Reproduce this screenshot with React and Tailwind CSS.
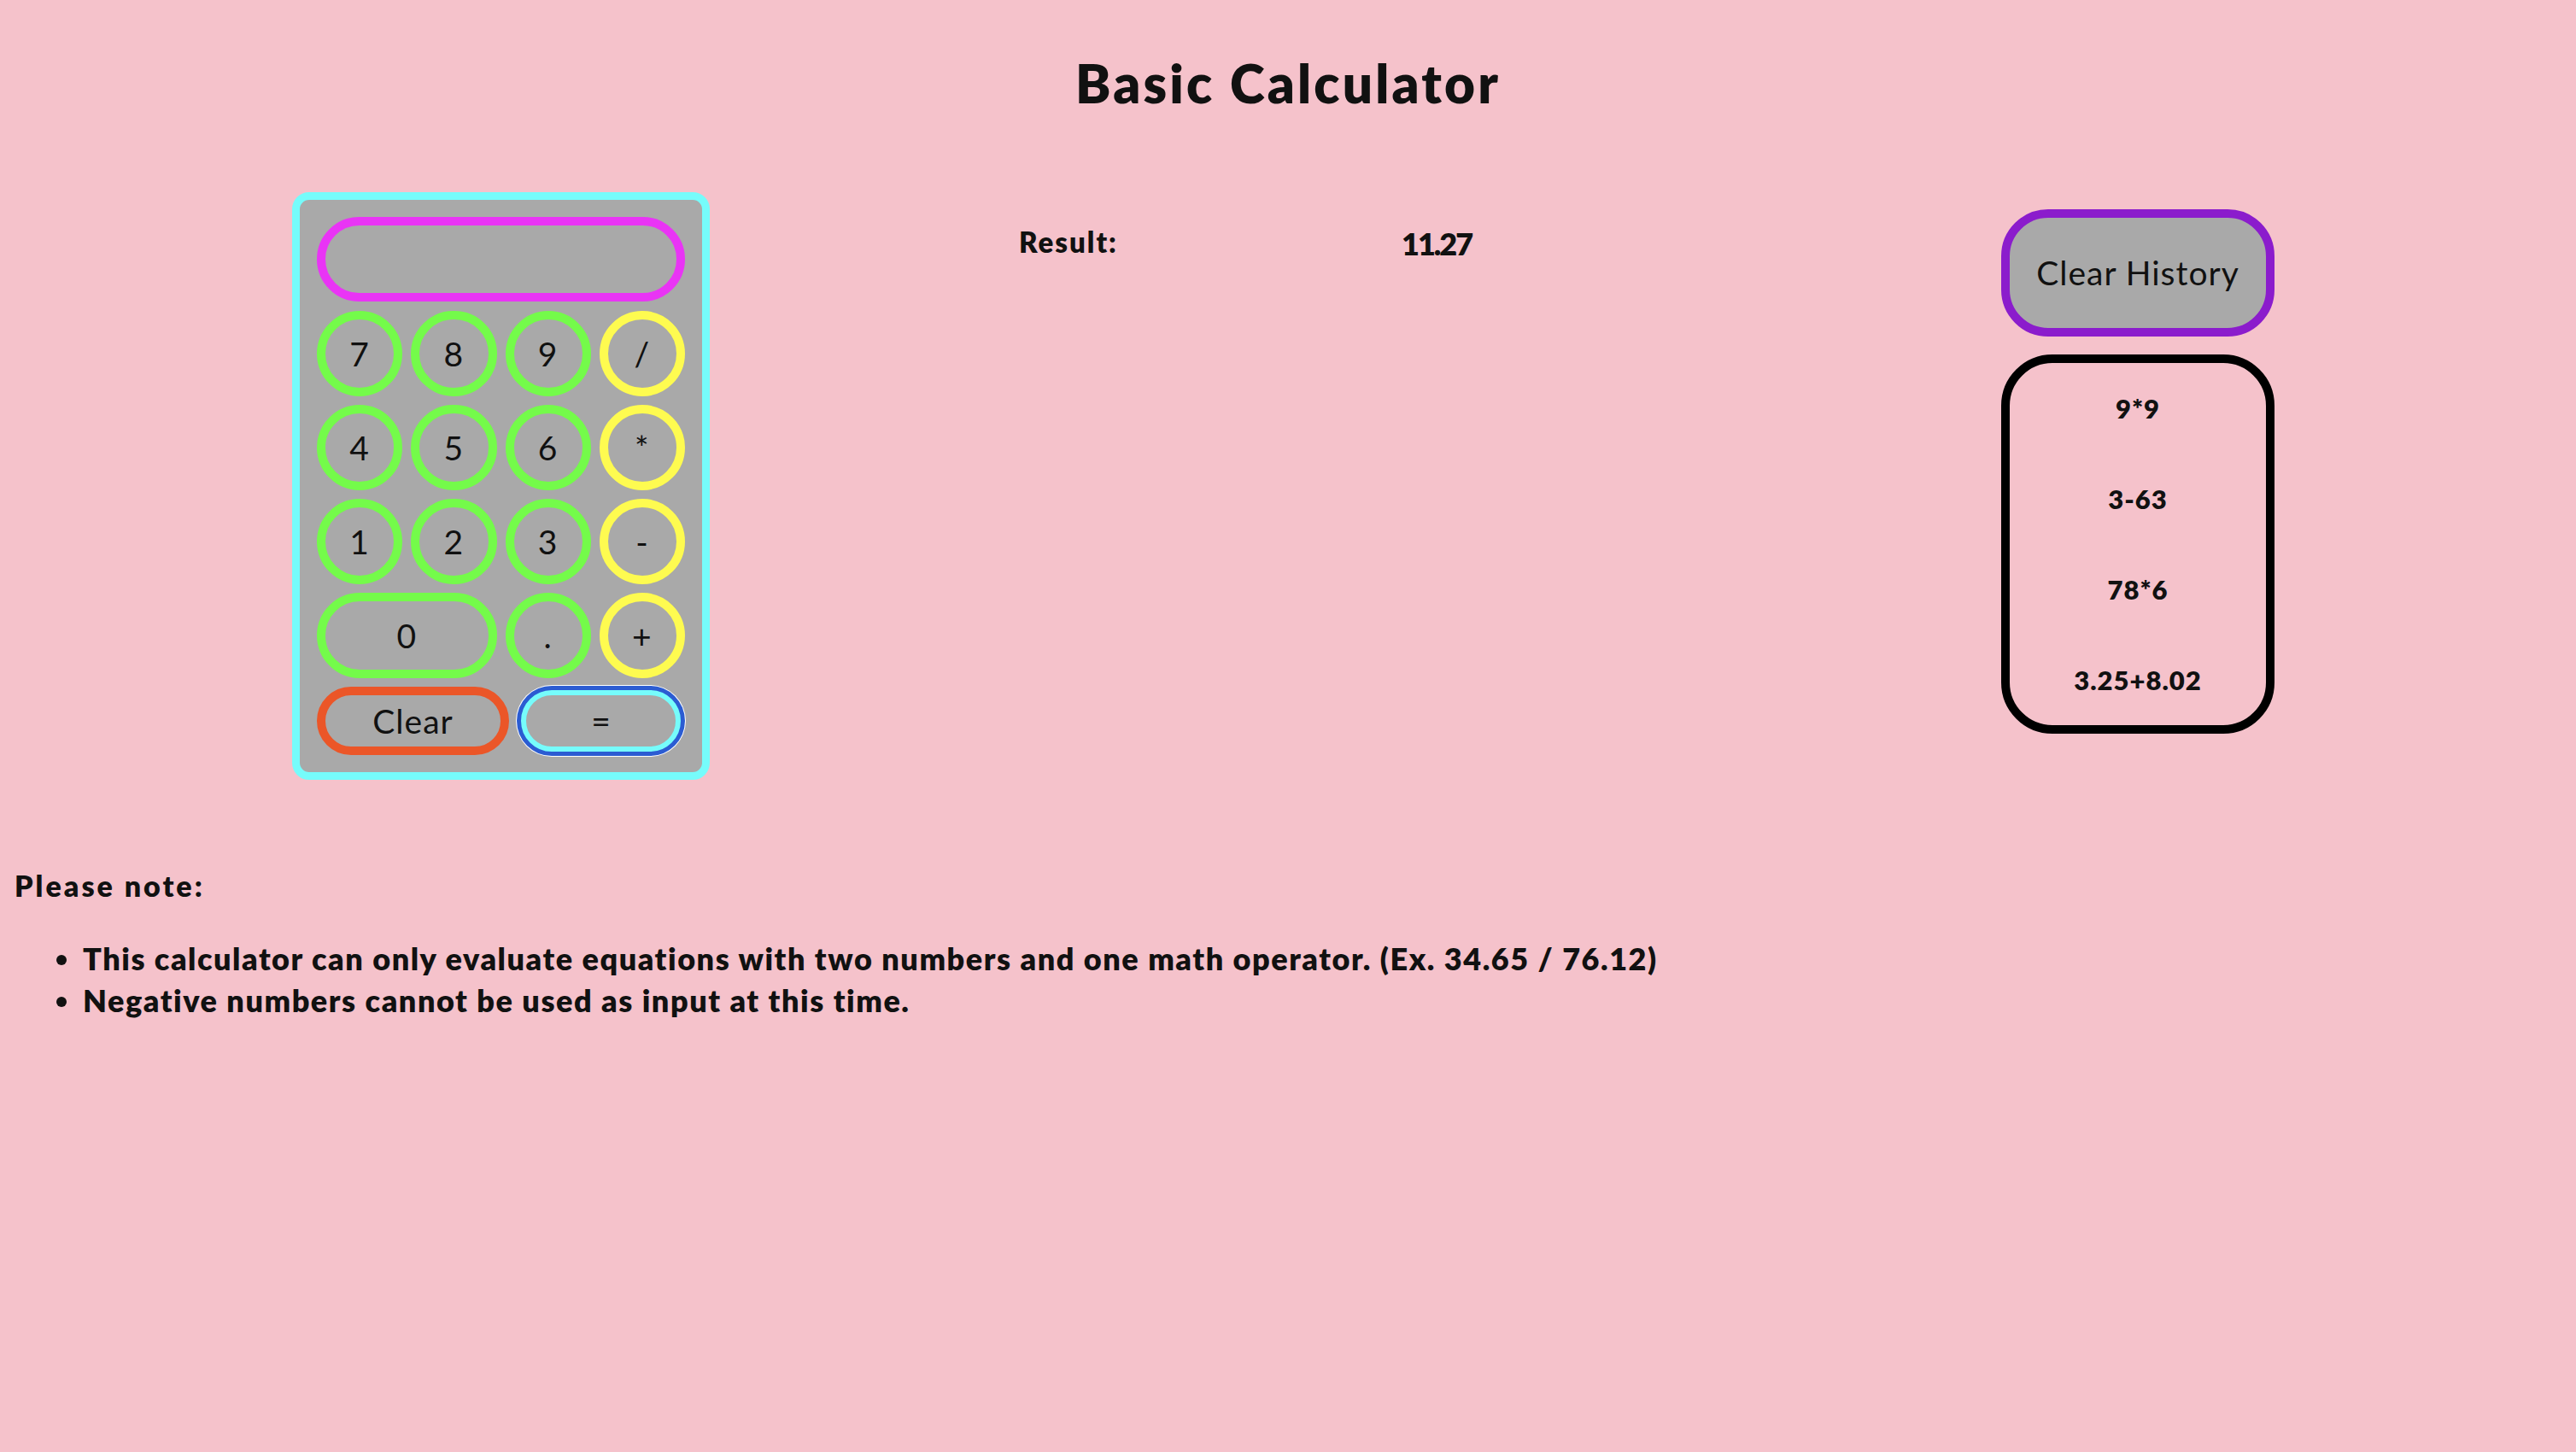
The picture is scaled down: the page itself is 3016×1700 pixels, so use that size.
import React from 'react';

const keys = [
    ['7', 'num'], ['8', 'num'], ['9', 'num'], ['/', 'op'],
    ['4', 'num'], ['5', 'num'], ['6', 'num'], ['*', 'op'],
    ['1', 'num'], ['2', 'num'], ['3', 'num'], ['-', 'op'],
];

const history = ['9*9', '3-63', '78*6', '3.25+8.02'];

function Key({ label, kind, wide }) {
    const ring = kind === 'op' ? 'border-[#fefb50]' : 'border-[#74fb4a]';
    return (
        <button
            className={`${wide ? 'col-span-2 rounded-full' : 'rounded-full'} h-[100px] border-[10px] ${ring} bg-[#a9a9a9] text-[39px] leading-none tracking-[1px] text-[#111] flex items-center justify-center`}
        >
            {label}
        </button>
    );
}

function Calculator() {
    return (
        <div className="w-[489px] shrink-0 rounded-[20px] border-[9px] border-[#76fcfb] bg-[#a9a9a9] p-[20px]">
            <div className="h-[99px] rounded-full border-[10px] border-[#e934f5] bg-[#a9a9a9]" />
            <div className="mt-[11px] grid grid-cols-4 gap-[10px]">
                {keys.map(([label, kind]) => (
                    <Key key={label} label={label} kind={kind} />
                ))}
                <Key label="0" kind="num" wide />
                <Key label="." kind="num" />
                <Key label="+" kind="op" />
            </div>
            <div className="mt-[10px] flex items-center">
                <button className="h-[80px] w-[225px] rounded-full border-[10px] border-[#eb5628] bg-[#a9a9a9] text-[39px] leading-none tracking-[1px] text-[#111]">
                    Clear
                </button>
                <button className="ml-[14px] h-[72px] w-[187px] rounded-full border-[6px] border-[#76fcfb] bg-[#a9a9a9] text-[39px] leading-none text-[#111] shadow-[0_0_0_5px_#2b5cd2,0_0_0_6px_#ffffff]">
                    =
                </button>
            </div>
        </div>
    );
}

export default function App() {
    return (
        <div className="min-h-screen bg-[#f5c2cb] font-['Lato','Liberation_Sans',sans-serif] text-[#111] overflow-hidden">
            <h1 className="pt-[60px] text-center text-[62px] font-extrabold leading-[1.2] tracking-[3.2px]">
                Basic Calculator
            </h1>

            <div className="mt-[91px] flex items-start pl-[342px]">
                <Calculator />

                <div className="ml-[362px] mt-[39px] flex items-start">
                    <div className="w-[448px] text-[33px] font-extrabold leading-[1.2] tracking-[2px]">Result:</div>
                    <div className="text-[36px] font-extrabold leading-[1.2] tracking-[-2px]">11.27</div>
                </div>

                <div className="ml-auto mr-[353px] mt-[20px] flex w-[320px] flex-col">
                    <button className="h-[149px] rounded-[55px] border-[10px] border-[#8b1ccc] bg-[#a9a9a9] text-[39px] leading-none tracking-[1px] text-[#111]">
                        Clear History
                    </button>
                    <div className="mt-[21px] rounded-[60px] border-[10px] border-black">
                        {history.map((item) => (
                            <div key={item} className="flex h-[106px] items-center justify-center text-[31px] font-extrabold tracking-[1px]">
                                {item}
                            </div>
                        ))}
                    </div>
                </div>
            </div>

            <p className="mt-[104px] pl-[17px] text-[34px] font-extrabold leading-[1.2] tracking-[3px]">Please note:</p>
            <ul className="mt-[40px] list-disc pl-[97px] text-[36px] font-extrabold leading-[48.5px] tracking-[1.55px]">
                <li>This calculator can only evaluate equations with two numbers and one math operator. (Ex. 34.65 / 76.12)</li>
                <li>Negative numbers cannot be used as input at this time.</li>
            </ul>
        </div>
    );
}
